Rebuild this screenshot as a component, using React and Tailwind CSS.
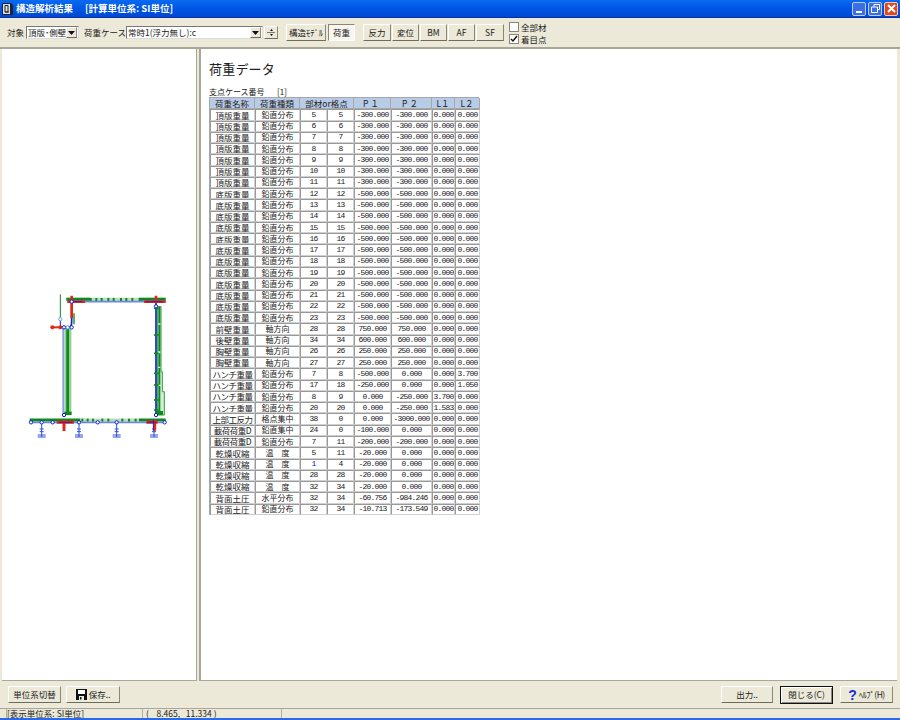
import React from 'react'

const font = { fontFamily: '"Noto Sans CJK JP", "Liberation Sans", sans-serif' }

const rows = [
  ['頂版重量', '鉛直分布', '5', '5', '-300.000', '-300.000', '0.000', '0.000'],
  ['頂版重量', '鉛直分布', '6', '6', '-300.000', '-300.000', '0.000', '0.000'],
  ['頂版重量', '鉛直分布', '7', '7', '-300.000', '-300.000', '0.000', '0.000'],
  ['頂版重量', '鉛直分布', '8', '8', '-300.000', '-300.000', '0.000', '0.000'],
  ['頂版重量', '鉛直分布', '9', '9', '-300.000', '-300.000', '0.000', '0.000'],
  ['頂版重量', '鉛直分布', '10', '10', '-300.000', '-300.000', '0.000', '0.000'],
  ['頂版重量', '鉛直分布', '11', '11', '-300.000', '-300.000', '0.000', '0.000'],
  ['底版重量', '鉛直分布', '12', '12', '-500.000', '-500.000', '0.000', '0.000'],
  ['底版重量', '鉛直分布', '13', '13', '-500.000', '-500.000', '0.000', '0.000'],
  ['底版重量', '鉛直分布', '14', '14', '-500.000', '-500.000', '0.000', '0.000'],
  ['底版重量', '鉛直分布', '15', '15', '-500.000', '-500.000', '0.000', '0.000'],
  ['底版重量', '鉛直分布', '16', '16', '-500.000', '-500.000', '0.000', '0.000'],
  ['底版重量', '鉛直分布', '17', '17', '-500.000', '-500.000', '0.000', '0.000'],
  ['底版重量', '鉛直分布', '18', '18', '-500.000', '-500.000', '0.000', '0.000'],
  ['底版重量', '鉛直分布', '19', '19', '-500.000', '-500.000', '0.000', '0.000'],
  ['底版重量', '鉛直分布', '20', '20', '-500.000', '-500.000', '0.000', '0.000'],
  ['底版重量', '鉛直分布', '21', '21', '-500.000', '-500.000', '0.000', '0.000'],
  ['底版重量', '鉛直分布', '22', '22', '-500.000', '-500.000', '0.000', '0.000'],
  ['底版重量', '鉛直分布', '23', '23', '-500.000', '-500.000', '0.000', '0.000'],
  ['前壁重量', '軸方向', '28', '28', '750.000', '750.000', '0.000', '0.000'],
  ['後壁重量', '軸方向', '34', '34', '600.000', '600.000', '0.000', '0.000'],
  ['胸壁重量', '軸方向', '26', '26', '250.000', '250.000', '0.000', '0.000'],
  ['胸壁重量', '軸方向', '27', '27', '250.000', '250.000', '0.000', '0.000'],
  ['ハンチ重量', '鉛直分布', '7', '8', '-500.000', '0.000', '0.000', '3.700'],
  ['ハンチ重量', '鉛直分布', '17', '18', '-250.000', '0.000', '0.000', '1.050'],
  ['ハンチ重量', '鉛直分布', '8', '9', '0.000', '-250.000', '3.700', '0.000'],
  ['ハンチ重量', '鉛直分布', '20', '20', '0.000', '-250.000', '1.583', '0.000'],
  ['上部工反力', '格点集中', '38', '0', '0.000', '-3000.000', '0.000', '0.000'],
  ['載荷荷重D', '鉛直集中', '24', '0', '-100.000', '0.000', '0.000', '0.000'],
  ['載荷荷重D', '鉛直分布', '7', '11', '-200.000', '-200.000', '0.000', '0.000'],
  ['乾燥収縮', '温　度', '5', '11', '-20.000', '0.000', '0.000', '0.000'],
  ['乾燥収縮', '温　度', '1', '4', '-20.000', '0.000', '0.000', '0.000'],
  ['乾燥収縮', '温　度', '28', '28', '-20.000', '0.000', '0.000', '0.000'],
  ['乾燥収縮', '温　度', '32', '34', '-20.000', '0.000', '0.000', '0.000'],
  ['背面土圧', '水平分布', '32', '34', '-60.756', '-984.246', '0.000', '0.000'],
  ['背面土圧', '鉛直分布', '32', '34', '-10.713', '-173.549', '0.000', '0.000'],
]

const raised = 'border border-t-white border-l-white border-r-[#8a8778] border-b-[#6f6c5f] bg-[#ece9d8]'
const sunken = 'border border-t-[#777] border-l-[#777] border-r-[#ddd] border-b-[#ddd] bg-white'

function TabButton({ children, className = '', active }) {
  return (
    <div
      className={`flex h-[17px] items-center justify-center whitespace-nowrap text-[8.5px] text-[#222] ${
        active ? 'border border-t-[#8a8778] border-l-[#8a8778] border-r-white border-b-white bg-[#f7f6f0]' : raised
      } ${className}`}
    >
      {children}
    </div>
  )
}

function Arrow() {
  return (
    <div className={`flex h-[11px] w-[11px] shrink-0 items-center justify-center ${raised}`}>
      <svg width="7" height="4" viewBox="0 0 7 4">
        <path d="M0 0h7L3.5 4z" fill="#111" />
      </svg>
    </div>
  )
}

function Check({ checked }) {
  return (
    <div className="flex h-[10px] w-[10px] items-center justify-center border border-[#8a8778] bg-white">
      {checked && (
        <svg width="8" height="8" viewBox="0 0 8 8">
          <path d="M1 4l2 2 4-5" fill="none" stroke="#111" strokeWidth="1.5" />
        </svg>
      )}
    </div>
  )
}

function Node({ x, y, c = '#1020d0' }) {
  return <circle cx={x} cy={y} r="5" fill="#fff" stroke={c} strokeWidth="3" />
}

function Support({ x }) {
  return (
    <g stroke="#2a50d8" strokeWidth="3" fill="none">
      <path d={`M${x} 412V456`} />
      <path d={`M${x - 6} 432H${x + 6}M${x - 6} 440H${x + 6}`} />
      <path d={`M${x - 12} 450H${x + 12}M${x - 12} 456H${x + 12}`} />
    </g>
  )
}

const topTicks = [215, 232, 248, 268, 284, 306, 322, 340, 362]
const bottomTicks = [190, 206, 222, 250, 268, 310, 330, 350]
const sideTicks = [70, 150, 205, 265, 300, 345, 375]

// 骨組モデル
function Model() {
  return (
    <svg width="160" height="160" viewBox="0 0 480 480">
      <rect x="137" y="128" width="20" height="256" fill="#8fcf8f" />
      <path d="M133 128V390" stroke="#8aa0e0" strokeWidth="6" />
      <path d="M146 128V386" stroke="#0c8a1c" strokeWidth="8" />
      <path d="M136 380H158V390H136z" fill="#0c8a1c" />

      <path d="M415 65H426V260H430V320H436V390H415z" fill="#d4ecd4" stroke="#2f9f3f" strokeWidth="3" />
      <path d="M421 65V390" stroke="#0c8a1c" strokeWidth="6" strokeDasharray="50 4 80 6 40 4" />
      <path d="M411 50V385" stroke="#1020d0" strokeWidth="5" />
      {sideTicks.map((y) => (
        <path key={y} d={`M405 ${y}h14`} stroke="#0c8a1c" strokeWidth="5" />
      ))}
      <path d="M412 378H432V390H412z" fill="#0c8a1c" />

      <path d="M142 44H440" stroke="#b8dcb8" strokeWidth="11" />
      <path d="M142 43H215M360 43H440" stroke="#0c8a1c" strokeWidth="9" />
      {topTicks.map((x) => (
        <path key={x} d={`M${x} 39v9`} stroke="#0c8a1c" strokeWidth="6" />
      ))}
      <path d="M145 50H440" stroke="#6f86e8" strokeWidth="5" />
      <path d="M158 60V110Q158 127 148 127H135" fill="none" stroke="#1020d0" strokeWidth="5" />
      <path d="M165 85V118" stroke="#0c8a1c" strokeWidth="4" />

      <path d="M145 50H198M375 50H440" stroke="#e02818" strokeWidth="8" />
      <path d="M158 32V100M411 32V54" stroke="#e02818" strokeWidth="8" />
      <path d="M150 50H190M380 50H432" stroke="#1020d0" strokeWidth="2.5" />

      <path d="M124 28V100" stroke="#0c8a1c" strokeWidth="3" />
      <path d="M124 103V127" stroke="#1020d0" strokeWidth="3" />
      <path d="M100 127H126" stroke="#e02818" strokeWidth="6" />
      <circle cx="100" cy="127" r="6" fill="#e02818" />
      <circle cx="124" cy="127" r="6" fill="#e02818" />
      <Node x={124} y={103} c="#7a90e0" />
      <Node x={135} y={127} />
      <Node x={146} y={127} c="#7a90e0" />
      <Node x={158} y={127} />
      <Node x={158} y={50} />
      <Node x={411} y={64} />
      <Node x={411} y={390} />
      <Node x={135} y={390} />

      <path d="M185 405H360" stroke="#b8dcb8" strokeWidth="9" />
      <path d="M32 405H184M360 405H440" stroke="#0c8a1c" strokeWidth="9" />
      {bottomTicks.map((x) => (
        <path key={x} d={`M${x} 401v9`} stroke="#0c8a1c" strokeWidth="6" />
      ))}
      <path d="M35 412H437" stroke="#6f86e8" strokeWidth="5" />
      <Support x={68} />
      <Support x={180} />
      <Support x={293} />
      <Support x={405} />
      <path d="M113 412H165M382 412H416" stroke="#e02818" strokeWidth="9" />
      <path d="M135 406V438M407 404V437" stroke="#e02818" strokeWidth="9" />
      <path d="M120 412H160M385 412H412M403 405V437" fill="none" stroke="#1020d0" strokeWidth="2.5" />
      <Node x={36} y={412} />
      <Node x={68} y={412} />
      <Node x={101} y={412} />
      <Node x={180} y={412} />
      <Node x={236} y={412} />
      <Node x={293} y={412} />
      <Node x={437} y={412} />
    </svg>
  )
}

function Cell({ children, className = '' }) {
  return (
    <div
      className={`flex items-center justify-center overflow-hidden whitespace-nowrap border border-t-[#999] border-l-[#999] border-r-[#d0d0d0] border-b-[#d0d0d0] bg-white leading-none text-[#222] ${className}`}
    >
      {children}
    </div>
  )
}

function Head({ children, className = '' }) {
  return (
    <div className={`flex items-center justify-center whitespace-nowrap border-b border-r border-[#a8a8a8] bg-[#b8cce8] leading-none text-[#222] ${className}`}>
      {children}
    </div>
  )
}

const num = "font-['Liberation_Mono'] text-[8px] tracking-[-0.8px]"

export default function App() {
  return (
    <div className="flex h-[720px] w-[900px] flex-col overflow-hidden bg-[#ece9d8]" style={font}>
      <div className="flex h-[18px] shrink-0 items-center border-b border-[#0a2fa8] bg-gradient-to-b from-[#0a6af0] via-[#0056e4] to-[#0048d4] pr-[2px]">
        <svg className="ml-[2px]" width="11" height="13" viewBox="0 0 11 13">
          <path d="M0 1h9l2 2v10H0z" fill="#20242c" />
          <path d="M1 2h7v10H1z" fill="#d8e0e4" />
          <path d="M3 3.5h3v6.5H3zM3 10h4" fill="none" stroke="#20242c" />
        </svg>
        <span className="ml-[3px] whitespace-nowrap text-[9.5px] font-bold text-white">構造解析結果</span>
        <span className="ml-[12px] whitespace-nowrap text-[9.5px] font-bold text-white">[計算単位系: SI単位]</span>
        <div className="ml-auto flex gap-[2px]">
          <div className="flex h-[14px] w-[14px] items-end justify-center rounded-[2px] border border-[#b8cdf8] bg-[#3d6ee8] pb-[2px]">
            <div className="h-[2px] w-[6px] bg-white" />
          </div>
          <div className="flex h-[14px] w-[14px] items-center justify-center rounded-[2px] border border-[#b8cdf8] bg-[#3d6ee8]">
            <svg width="9" height="9" viewBox="0 0 9 9" fill="none" stroke="#fff">
              <path d="M3 2.5V.5h5.5v5H6.5" />
              <path d="M.5 3h6v5.5h-6z" />
            </svg>
          </div>
          <div className="flex h-[14px] w-[14px] items-center justify-center rounded-[2px] border border-[#f0c8b8] bg-[#dc4a24]">
            <svg width="9" height="9" viewBox="0 0 9 9" stroke="#fff" strokeWidth="2">
              <path d="M1 1l7 7M8 1l-7 7" />
            </svg>
          </div>
        </div>
      </div>

      <div className="flex h-[29px] shrink-0 items-center text-[8.5px] text-[#222]">
        <span className="ml-[7px] w-[19px] whitespace-nowrap">対象</span>
        <div className={`flex h-[13px] w-[53px] items-center justify-between pr-px ${sunken}`}>
          <span className="whitespace-nowrap pl-px text-[8.5px] leading-none">頂版･側壁</span>
          <Arrow />
        </div>
        <span className="ml-[5px] w-[42px] whitespace-nowrap">荷重ケース</span>
        <div className={`flex h-[13px] w-[137px] items-center justify-between pl-px pr-px ${sunken}`}>
          <span className="whitespace-nowrap text-[8.5px] leading-none">常時1(浮力無し):c</span>
          <Arrow />
        </div>
        <div className={`ml-px flex h-[13px] w-[14px] flex-col items-center justify-center gap-[1px] ${raised}`}>
          <svg width="3" height="2" viewBox="0 0 3 2">
            <path d="M0 2h3L1.5 0z" fill="#111" />
          </svg>
          <div className="h-px w-[8px] bg-[#777]" />
          <svg width="3" height="2" viewBox="0 0 3 2">
            <path d="M0 0h3L1.5 2z" fill="#111" />
          </svg>
        </div>
        <TabButton className="ml-[8px] w-[40px]">構造ﾓﾃﾞﾙ</TabButton>
        <TabButton active className="ml-[2px] w-[27px]">荷重</TabButton>
        <TabButton className="ml-[8px] w-[28px]">反力</TabButton>
        <TabButton className="ml-px w-[27px]">変位</TabButton>
        <TabButton className="ml-px w-[27px]">BM</TabButton>
        <TabButton className="ml-px w-[27px]">AF</TabButton>
        <TabButton className="ml-px w-[28px]">SF</TabButton>
        <div className="ml-[5px] flex flex-col gap-[2px]">
          <div className="flex items-center gap-[2px]">
            <Check />
            <span className="leading-[10px]">全部材</span>
          </div>
          <div className="flex items-center gap-[2px]">
            <Check checked />
            <span className="leading-[10px]">着目点</span>
          </div>
        </div>
      </div>

      <div className="flex min-h-0 flex-1 border-t-2 border-[#a8a698]">
        <div className="ml-[2px] flex w-[195px] shrink-0 items-center justify-center border-b border-r border-[#a8a698] bg-white">
          <Model />
        </div>
        <div className="ml-[2px] flex-1 border-b border-l-2 border-[#a8a698] bg-white pl-[8px] pt-[10px]">
          <div className="whitespace-nowrap text-[13px] leading-[20px] tracking-[0.2px] text-[#222]">荷重データ</div>
          <div className="mt-[7px] flex whitespace-nowrap text-[8px] leading-[11px] text-[#222]">
            <span className="w-[68px]">支点ケース番号</span>
            <span>[1]</span>
          </div>
          <div className="grid w-[270px] auto-rows-[11.27px] grid-cols-[45px_45px_27px_27px_37px_41px_23px_25px] border-l border-t border-[#a8a8a8] text-[8.5px]">
            <Head>荷重名称</Head>
            <Head>荷重種類</Head>
            <Head className="col-span-2">部材or格点</Head>
            <Head className="tracking-[2px]">P１</Head>
            <Head className="tracking-[2px]">P２</Head>
            <Head>L１</Head>
            <Head>L２</Head>
            {rows.map((r, i) => (
              <React.Fragment key={i}>
                <Cell className={r[0].length > 4 ? 'tracking-[-0.5px]' : ''}>{r[0]}</Cell>
                <Cell className="text-[8px]">{r[1]}</Cell>
                <Cell className={`${num} ${i === 31 ? '!text-[#0018d0]' : ''}`}>{r[2]}</Cell>
                <Cell className={num}>{r[3]}</Cell>
                <Cell className={num}>{r[4]}</Cell>
                <Cell className={num}>{r[5]}</Cell>
                <Cell className={num}>{r[6]}</Cell>
                <Cell className={num}>{r[7]}</Cell>
              </React.Fragment>
            ))}
          </div>
        </div>
        <div className="w-[3px] shrink-0" />
      </div>

      <div className="flex h-[27px] shrink-0 items-center pl-[8px] pr-[7px] text-[8.5px] text-[#222]">
        <div className={`flex h-[17px] w-[53px] items-center justify-center ${raised}`}>単位系切替</div>
        <div className={`ml-[5px] flex h-[17px] w-[54px] items-center justify-center gap-[2px] ${raised}`}>
          <svg width="11" height="11" viewBox="0 0 11 11">
            <path d="M0 0h11v11H0z" fill="#111" />
            <path d="M2 1h7v4H2z" fill="#fff" />
            <path d="M3 7h5v4H3z" fill="#e8e8e8" />
            <path d="M4 8h1.5v2.5H4z" fill="#111" />
          </svg>
          <span>保存..</span>
        </div>
        <div className={`ml-auto flex h-[17px] w-[52px] items-center justify-center ${raised}`}>出力..</div>
        <div className="ml-[7px] flex h-[18px] w-[53px] items-center justify-center border border-[#111] bg-[#ece9d8] shadow-[inset_1px_1px_0_#fff,inset_-1px_-1px_0_#888]">閉じる(C)</div>
        <div className={`ml-[7px] flex h-[17px] w-[53px] items-center justify-center gap-[2px] ${raised}`}>
          <span className="font-['Liberation_Sans'] text-[14px] font-bold leading-none text-[#1030d0]">?</span>
          <span className="whitespace-nowrap tracking-[-0.5px]">ﾍﾙﾌﾟ(H)</span>
        </div>
      </div>

      <div className="flex h-[10px] shrink-0 items-stretch gap-px border-t border-[#a8a698] pl-[6px] text-[8.5px] leading-[9px] text-[#222]">
        <div className="w-[137px] whitespace-nowrap border-x border-[#b0ae9f]">[表示単位系: SI単位]</div>
        <div className="w-[138px] whitespace-pre border-r border-[#b0ae9f] pl-[2px]">(    8.465,   11.334 )</div>
      </div>
      <div className="h-[2px] shrink-0 bg-[#2a6ae8]" />
    </div>
  )
}
